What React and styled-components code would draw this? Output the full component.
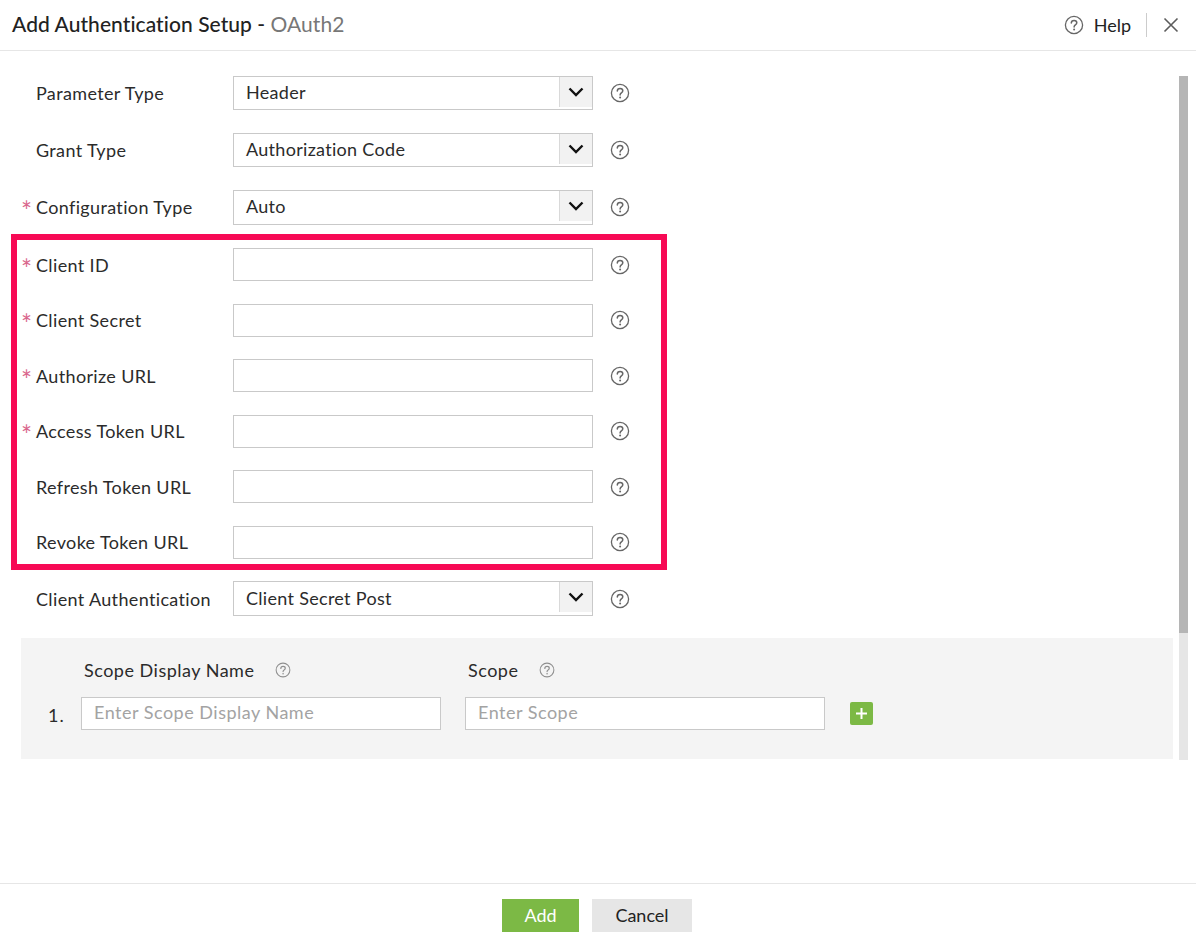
import React from 'react';
import styled, { createGlobalStyle } from 'styled-components';

const GlobalStyle = createGlobalStyle`
  html, body {
    margin: 0;
    padding: 0;
    background: #fff;
  }
  * {
    box-sizing: border-box;
  }
  body {
    font-family: Lato, "Open Sans", sans-serif;
    color: #222;
  }
`;

const Dialog = styled.div`
  width: 1196px;
  height: 944px;
  display: flex;
  flex-direction: column;
  overflow: hidden;
`;

const Header = styled.header`
  height: 51px;
  flex: none;
  display: flex;
  align-items: center;
  padding: 0 17px 0 12px;
  border-bottom: 1px solid #e6e6e6;
`;

const Title = styled.h1`
  flex: 1;
  margin: 0 0 3px;
  font-size: 21px;
  font-weight: 500;
  letter-spacing: 0.06px;
  color: #222;
  span {
    color: #777;
    font-weight: 400;
  }
`;

const HelpLink = styled.div`
  display: flex;
  align-items: center;
  gap: 10px;
  font-size: 18px;
  color: #222;
`;

const Divider = styled.div`
  width: 1px;
  height: 24px;
  margin: 0 16px 0 15px;
  background: #ccc;
`;

const Body = styled.main`
  flex: 1;
  display: flex;
  padding: 24.5px 8px 0 21px;
`;

const Content = styled.div`
  flex: 1;
  min-width: 0;
`;

const Scrollbar = styled.div`
  width: 9px;
  height: 684px;
  margin: 0.5px 0 0 6px;
  background: #e6e6e6;
`;

const ScrollThumb = styled.div`
  height: 557px;
  background: #b5b5b5;
`;

const Form = styled.div`
  display: flex;
  flex-direction: column;
  gap: 22.5px;
`;

const Highlighted = styled.div`
  position: relative;
  display: flex;
  flex-direction: column;
  gap: 22.5px;
  margin-top: 1.2px;
`;

const HighlightBox = styled.div`
  position: absolute;
  left: -10px;
  top: -14px;
  width: 656px;
  height: 335.500px;
  border: 6px solid #f70a55;
  pointer-events: none;
`;

const Row = styled.div`
  display: flex;
  align-items: center;
  height: ${(p) => (p.$tall ? '34.7px' : '33px')};
`;

const Label = styled.label`
  position: relative;
  width: 212px;
  padding-left: 15px;
  font-size: 18px;
  color: #2b2b2b;
  letter-spacing: 0.35px;
`;

const Required = styled.span`
  position: absolute;
  left: 0;
  top: 2px;
  color: #d9668c;
  font-size: 26px;
  line-height: 1;
`;

const SelectBox = styled.div`
  width: 360px;
  height: 100%;
  display: flex;
  justify-content: space-between;
  border: 1px solid #c9c9c9;
  background: #fff;
`;

const SelectValue = styled.div`
  padding: 0 12px 2px;
  align-self: center;
  font-size: 18px;
  color: #2b2b2b;
  letter-spacing: 0.3px;
`;

const SelectArrow = styled.div`
  width: 33px;
  height: 30px;
  display: flex;
  align-items: center;
  justify-content: center;
  background: #f2f2f2;
  border-left: 1px solid #d9d9d9;
`;

const TextInput = styled.input`
  width: 360px;
  height: 100%;
  padding: 0 12px 3px;
  border: 1px solid #c9c9c9;
  border-radius: 0;
  outline: none;
  background: #fff;
  font-family: inherit;
  font-size: 18px;
  letter-spacing: 0.5px;
  &::placeholder {
    color: #a3a3a3;
    opacity: 1;
  }
`;

const HintSlot = styled.div`
  display: flex;
  margin-left: 17px;
`;

const ScopePanel = styled.section`
  width: 1152px;
  height: 121px;
  margin-top: 22.5px;
  padding: 20px 0 0 27px;
  background: #f4f4f4;
`;

const ScopeHead = styled.div`
  display: flex;
  height: 24px;
  align-items: center;
  margin-left: 36px;
`;

const ScopeTitle = styled.div`
  display: flex;
  align-items: center;
  gap: 21px;
  width: 384px;
  font-size: 18px;
  color: #2b2b2b;
  letter-spacing: 0.5px;
`;

const ScopeRow = styled.div`
  display: flex;
  align-items: center;
  height: 33px;
  margin-top: 15px;
`;

const ScopeIndex = styled.div`
  width: 33px;
  padding-top: 2px;
  font-size: 18px;
  letter-spacing: 1px;
  color: #2b2b2b;
`;

const ScopeInput = styled(TextInput)`
  margin-right: 24px;
`;

const AddRowButton = styled.button`
  width: 23px;
  height: 23px;
  margin-left: 1px;
  padding: 0;
  display: flex;
  align-items: center;
  justify-content: center;
  border: 0;
  border-radius: 2px;
  background: #7cb945;
`;

const Footer = styled.footer`
  height: 61px;
  flex: none;
  display: flex;
  justify-content: center;
  gap: 13px;
  padding-top: 15px;
  padding-right: 2px;
  border-top: 1px solid #e6e6e6;
`;

const Button = styled.button`
  width: ${(p) => (p.$primary ? '77px' : '100px')};
  height: 33px;
  padding: 0 0 2px;
  border: 0;
  border-radius: 0;
  font-family: inherit;
  font-size: 18px;
  background: ${(p) => (p.$primary ? '#7cb945' : '#e6e6e6')};
  color: ${(p) => (p.$primary ? '#fff' : '#222')};
`;

const HelpIcon = ({ size = 20, color = '#666' }) => (
  <svg width={size} height={size} viewBox="0 0 20 20" fill="none">
    <circle cx="10" cy="10" r="8.6" stroke={color} strokeWidth="1.3" />
    <path
      d="M7.3 8c0-1.600 1.200-2.600 2.800-2.600 1.600 0 2.700 1 2.700 2.300 0 1.100-.6 1.700-1.500 2.300-.8.5-1.200 1-1.200 2"
      stroke={color}
      strokeWidth="1.500"
      strokeLinecap="round"
    />
    <circle cx="10.100" cy="14.600" r="1" fill={color} />
  </svg>
);

const Chevron = () => (
  <svg width="16" height="10" viewBox="0 0 16 10" fill="none">
    <path d="M1.500 1.500 8 8l6.500-6.500" stroke="#111" strokeWidth="2.400" />
  </svg>
);

const CloseIcon = () => (
  <svg width="16" height="16" viewBox="0 0 16 16" fill="none">
    <path d="M1.500 1.500l13 13M14.500 1.500l-13 13" stroke="#5c5c5c" strokeWidth="1.600" />
  </svg>
);

const PlusIcon = () => (
  <svg width="13" height="13" viewBox="0 0 13 13" fill="none">
    <path d="M6.500 1v11M1 6.500h11" stroke="#fff" strokeWidth="2" />
  </svg>
);

const Field = ({ label, required, value }) => (
  <Row $tall={value !== undefined}>
    <Label>
      {required && <Required>*</Required>}
      {label}
    </Label>
    {value !== undefined ? (
      <SelectBox>
        <SelectValue>{value}</SelectValue>
        <SelectArrow><Chevron /></SelectArrow>
      </SelectBox>
    ) : (
      <TextInput />
    )}
    <HintSlot><HelpIcon /></HintSlot>
  </Row>
);

const App = () => (
  <Dialog>
    <GlobalStyle />
    <Header>
      <Title>Add Authentication Setup - <span>OAuth2</span></Title>
      <HelpLink><HelpIcon />Help</HelpLink>
      <Divider />
      <CloseIcon />
    </Header>
    <Body>
      <Content>
        <Form>
          <Field label="Parameter Type" value="Header" />
          <Field label="Grant Type" value="Authorization Code" />
          <Field label="Configuration Type" value="Auto" required />
          <Highlighted>
            <Field label="Client ID" required />
            <Field label="Client Secret" required />
            <Field label="Authorize URL" required />
            <Field label="Access Token URL" required />
            <Field label="Refresh Token URL" />
            <Field label="Revoke Token URL" />
            <HighlightBox />
          </Highlighted>
          <Field label="Client Authentication" value="Client Secret Post" />
        </Form>
        <ScopePanel>
          <ScopeHead>
            <ScopeTitle>Scope Display Name <HelpIcon size={16} color="#8f8f8f" /></ScopeTitle>
            <ScopeTitle>Scope <HelpIcon size={16} color="#8f8f8f" /></ScopeTitle>
          </ScopeHead>
          <ScopeRow>
            <ScopeIndex>1.</ScopeIndex>
            <ScopeInput placeholder="Enter Scope Display Name" />
            <ScopeInput placeholder="Enter Scope" />
            <AddRowButton><PlusIcon /></AddRowButton>
          </ScopeRow>
        </ScopePanel>
      </Content>
      <Scrollbar><ScrollThumb /></Scrollbar>
    </Body>
    <Footer>
      <Button $primary>Add</Button>
      <Button>Cancel</Button>
    </Footer>
  </Dialog>
);

export default App;
